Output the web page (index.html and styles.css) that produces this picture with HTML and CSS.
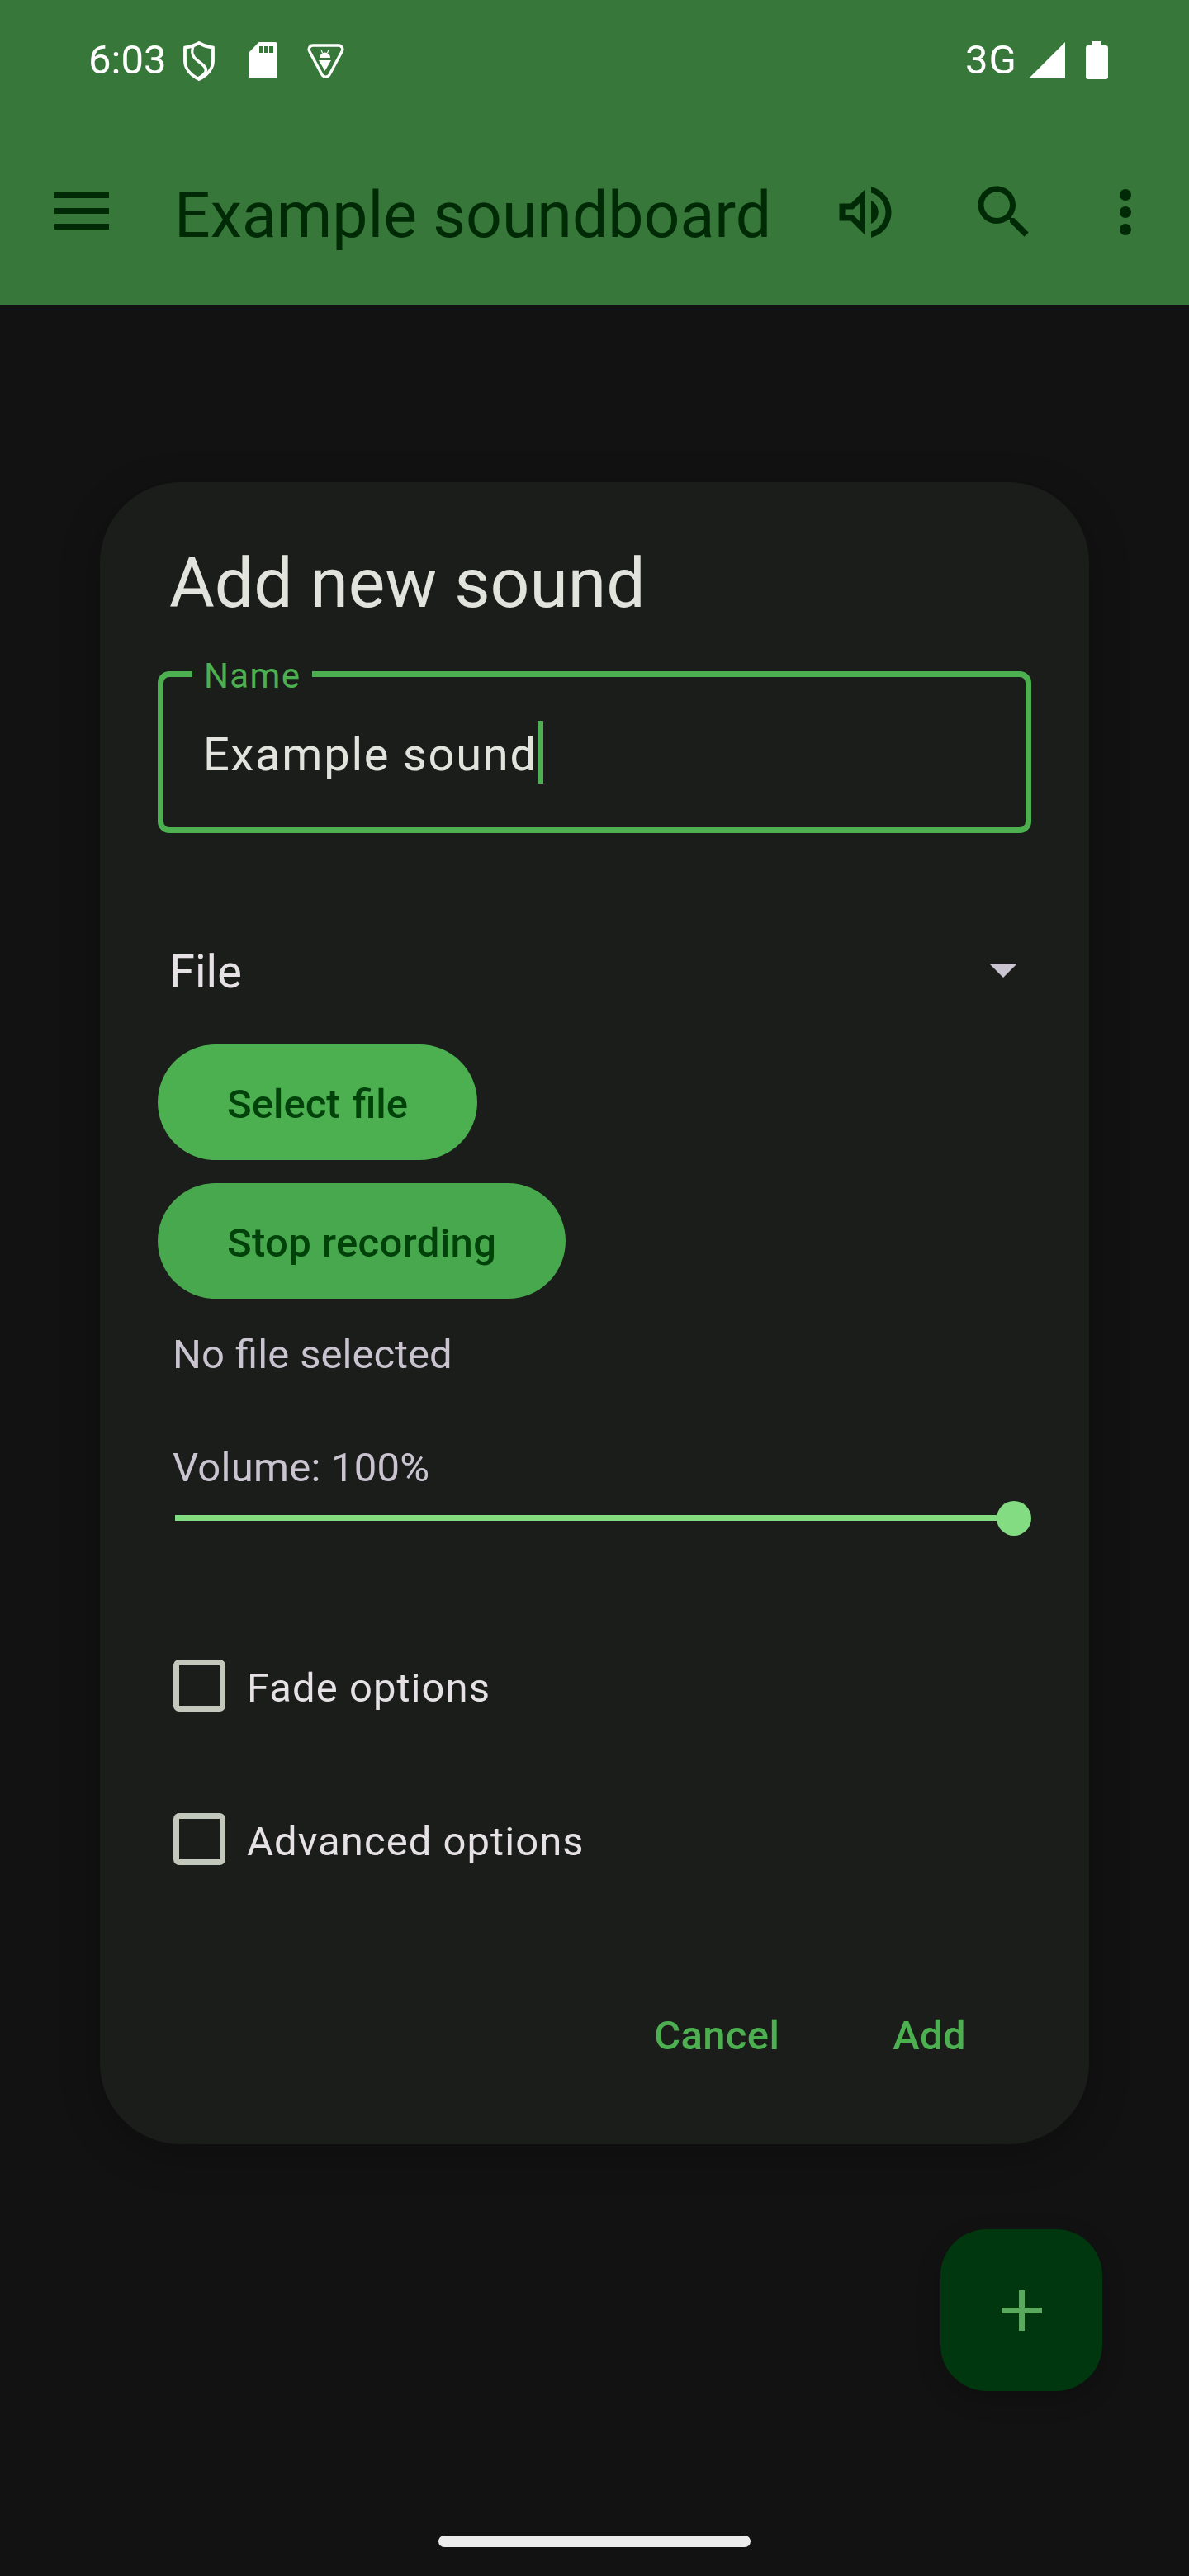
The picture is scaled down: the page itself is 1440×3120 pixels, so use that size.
FILE: index.html
```html
<!DOCTYPE html>
<html lang="en">

<head>
    <meta charset="utf-8">
    <meta name="viewport" content="width=device-width, initial-scale=1.0">
    <title>Example soundboard</title>
    <link rel="stylesheet" href="styles.css">
</head>

<body>
    <header class="appbar">
        <div class="status">
            <div class="status-left">
                <span class="clock">6:03</span>
                <svg class="ic-shield" viewBox="0 0 40 48">
                    <path d="M20 2 C25 5 31 7 37 7.5 V24 C37 33 30 41 20 46 C10 41 3 33 3 24 V7.5 C9 7 15 5 20 2 Z" fill="none" stroke="#fff" stroke-width="3.8" stroke-linejoin="round"/>
                    <path d="M13 6 C10 14 12 19 19 24 C26 29 30 33 28 37 C26 41 22 43 19 45" fill="none" stroke="#fff" stroke-width="3.4"/>
                </svg>
                <svg class="ic-sd" viewBox="0 0 35 44">
                    <path d="M12.5 0 H32 A3 3 0 0 1 35 3 V41 A3 3 0 0 1 32 44 H3 A3 3 0 0 1 0 41 V13 Z" fill="#fff"/>
                    <rect x="13" y="5" width="4" height="8" fill="#37783a"/>
                    <rect x="19" y="5" width="4" height="8" fill="#37783a"/>
                    <rect x="25" y="5" width="5" height="8" fill="#37783a"/>
                </svg>
                <svg class="ic-tri" viewBox="0 0 45 42">
                    <path d="M7 2 H38 C42 2 44 6 42 9.500 L27 37.500 C25 41 20 41 18 37.500 L3 9.500 C1 6 3 2 7 2 Z" fill="none" stroke="#fff" stroke-width="3.400"/>
                    <path d="M15 17 A6.500 6.500 0 0 1 28 17 Z" fill="#fff"/>
                    <path d="M17 7.500 L18.500 11 M26 7.500 L24.500 11" stroke="#fff" stroke-width="1.200"/>
                    <path d="M14 20 H29 L21.500 33 Z" fill="#fff"/>
                </svg>
            </div>
            <div class="status-right">
                <span class="net">3G</span>
                <svg class="ic-signal" viewBox="0 0 44 44"><path d="M44 0 V44 H0 Z" fill="#fff"/></svg>
                <svg class="ic-battery" viewBox="0 0 27 46"><path d="M7 0 H19 V5 H24 A3 3 0 0 1 27 8 V43 A3 3 0 0 1 24 46 H3 A3 3 0 0 1 0 43 V8 A3 3 0 0 1 3 5 H7 Z" fill="#fff"/></svg>
            </div>
        </div>
        <div class="toolbar">
            <svg class="ic-menu" viewBox="0 0 66 45">
                <rect width="66" height="7"/>
                <rect y="19" width="66" height="7"/>
                <rect y="38" width="66" height="7"/>
            </svg>
            <h1 class="toolbar-title">Example soundboard</h1>
            <div class="actions">
                <svg class="ic-action" viewBox="0 0 24 24"><path d="M3 9v6h4l5 5V4L7 9H3zm7-.17v6.34L7.830 13H5v-2h2.830L10 8.830zM16.500 12c0-1.770-1.020-3.290-2.500-4.030v8.050c1.480-.73 2.500-2.250 2.500-4.020zM14 3.230v2.060c2.890.86 5 3.540 5 6.710s-2.110 5.850-5 6.710v2.060c4.010-.91 7-4.490 7-8.770 0-4.280-2.990-7.860-7-8.770z"/></svg>
                <svg class="ic-action ic-search" viewBox="0 0 24 24"><path d="M15.500 14h-.79l-.28-.27C15.410 12.590 16 11.110 16 9.500 16 5.910 13.090 3 9.500 3S3 5.910 3 9.500 5.910 16 9.500 16c1.610 0 3.090-.59 4.230-1.570l.27.28v.79l5 4.990L20.490 19l-4.990-5zm-6 0C7.010 14 5 11.990 5 9.500S7.010 5 9.500 5 14 7.010 14 9.500 11.990 14 9.500 14z"/></svg>
                <svg class="ic-more" viewBox="0 0 14 56">
                    <circle cx="7" cy="7" r="7"/>
                    <circle cx="7" cy="28" r="7"/>
                    <circle cx="7" cy="49" r="7"/>
                </svg>
            </div>
        </div>
    </header>

    <main class="screen">
        <section class="dialog">
            <h2 class="dialog-title">Add new sound</h2>

            <div class="field">
                <span class="field-label">Name</span>
                <span class="field-value">Example sound</span>
                <span class="caret"></span>
            </div>

            <div class="file-row">
                <span>File</span>
                <span class="arrow"></span>
            </div>

            <div class="file-buttons">
                <button class="pill pill-select">Select file</button>
                <button class="pill pill-active">Stop recording</button>
            </div>

            <p class="hint hint-file">No file selected</p>
            <p class="hint hint-volume">Volume: 100%</p>
            <div class="slider">
                <span class="slider-track"></span>
                <span class="slider-thumb"></span>
            </div>

            <label class="check check-first">
                <span class="check-box"></span>
                <span class="check-text">Fade options</span>
            </label>
            <label class="check check-second">
                <span class="check-box"></span>
                <span class="check-text">Advanced options</span>
            </label>

            <div class="dialog-actions">
                <button class="text-btn">Cancel</button>
                <button class="text-btn">Add</button>
            </div>
        </section>
    </main>

    <button class="fab">
        <svg viewBox="0 0 49 49"><path d="M21 0 H28 V21 H49 V28 H28 V49 H21 V28 H0 V21 H21 Z"/></svg>
    </button>
    <div class="home-pill"></div>
</body>

</html>
```

FILE: styles.css
```css
* {
    box-sizing: border-box;
}

html,
body {
    margin: 0;
    padding: 0;
}

body {
    position: relative;
    width: 1440px;
    height: 3120px;
    overflow: hidden;
    background-color: #111211;
    font-family: Roboto, "Liberation Sans", sans-serif;
}

button {
    border: none;
    background: none;
    padding: 0;
    font-family: inherit;
}

/* top bar */

.appbar {
    background-color: #37783a;
}

.status {
    display: flex;
    justify-content: space-between;
    align-items: center;
    height: 145px;
    padding: 0 98px 0 107px;
    color: #fff;
    font-size: 49px;
}

.status-left,
.status-right {
    display: flex;
    align-items: center;
}

.net {
    letter-spacing: 1px;
}

.ic-shield {
    width: 40px;
    height: 48px;
    margin: 3px 0 0 20px;
}

.ic-sd {
    width: 35px;
    height: 44px;
    margin: 1px 0 0 40px;
}

.ic-tri {
    width: 45px;
    height: 42px;
    margin: 3px 0 0 36px;
}

.ic-signal {
    width: 44px;
    height: 44px;
    margin: 1px 0 0 14px;
}

.ic-battery {
    width: 27px;
    height: 46px;
    margin: 0 0 0 25px;
}

.toolbar {
    display: flex;
    align-items: center;
    height: 224px;
    padding: 0 70px 0 66px;
    color: #002a06;
    fill: #002a06;
}

.ic-menu {
    width: 66px;
    height: 45px;
    margin-top: -3px;
}

.toolbar-title {
    margin: 7px 0 0 79px;
    font-size: 77px;
    font-weight: 400;
    line-height: 100px;
}

.actions {
    display: flex;
    align-items: center;
    margin-left: auto;
}

.ic-action {
    width: 84px;
    height: 84px;
}

.ic-search {
    margin-left: 84px;
}

.ic-more {
    width: 14px;
    height: 56px;
    margin-left: 98px;
}

/* dialog */

.screen {
    padding: 215px 121px 0;
}

.dialog {
    display: flex;
    flex-direction: column;
    width: 1198px;
    height: 2013px;
    padding: 73px 70px 0;
    border-radius: 98px;
    background-color: #1b1d1b;
    box-shadow: 0 12px 48px rgba(0, 0, 0, .25);
}

.dialog-title {
    margin: 0 0 0 14px;
    color: #e2e3dd;
    font-size: 84px;
    font-weight: 400;
    line-height: 100px;
}

.field {
    position: relative;
    display: flex;
    align-items: center;
    height: 196px;
    margin-top: 56px;
    padding-left: 48px;
    border: 7px solid #4caf50;
    border-radius: 14px;
}

.field-label {
    position: absolute;
    top: -22px;
    left: 35px;
    width: 145px;
    padding-left: 14px;
    background-color: #1b1d1b;
    color: #4caf50;
    font-size: 42px;
    line-height: 42px;
    letter-spacing: 1.4px;
}

.field-value {
    margin-top: 5px;
    color: #e2e3dd;
    font-size: 56px;
    line-height: 76px;
    letter-spacing: 1.75px;
}

.caret {
    width: 7px;
    height: 76px;
    background-color: #4caf50;
}

.file-row {
    display: flex;
    justify-content: space-between;
    align-items: center;
    height: 76px;
    margin-top: 130px;
    padding: 0 17px 0 14px;
    color: #e6e1e5;
    font-size: 56px;
}

.arrow {
    width: 0;
    height: 0;
    margin-top: -3px;
    border-top: 17px solid #cac4d0;
    border-left: 17.5px solid transparent;
    border-right: 17.5px solid transparent;
}

.file-buttons {
    display: flex;
    flex-direction: column;
    align-items: flex-start;
    gap: 28px;
    margin-top: 50px;
}

.pill {
    height: 140px;
    padding: 4px 84px 0;
    border-radius: 70px;
    background-color: #4caf50;
    color: #00420a;
    font-size: 49px;
    font-weight: 500;
}

/* no letter-spacing here, it would break up the fi ligature */
.pill-select {
    word-spacing: 3px;
}

.pill-active {
    background-color: #48a84d;
    letter-spacing: .35px;
}

.hint {
    margin: 0;
    color: #cac4d0;
    font-size: 49px;
    line-height: 64px;
}

.hint-file {
    margin: 36px 0 0 18px;
    word-spacing: 1px;
}

.hint-volume {
    margin: 73px 0 0 18px;
    letter-spacing: .25px;
}

.slider {
    display: flex;
    align-items: center;
    margin: 8px 0 0 21px;
}

.slider-track {
    flex: 1;
    height: 7px;
    margin-top: -2px;
    background-color: #84dc82;
}

.slider-thumb {
    width: 42px;
    height: 42px;
    border-radius: 50%;
    background-color: #84dc82;
}

.check {
    display: flex;
    align-items: center;
    gap: 26px;
    margin-left: 19px;
    color: #e6e1e5;
    font-size: 49px;
    letter-spacing: 1.05px;
}

.check-first {
    margin-top: 150px;
}

.check-second {
    margin-top: 123px;
}

.check-box {
    width: 63px;
    height: 63px;
    border: 7px solid #c2c8bc;
    border-radius: 7px;
}

.check-text {
    margin-top: 6px;
    line-height: 57px;
}

.dialog-actions {
    display: flex;
    justify-content: flex-end;
    gap: 137px;
    margin-top: 175px;
    padding-right: 79px;
}

.text-btn {
    color: #4caf50;
    font-size: 49px;
    font-weight: 500;
    line-height: 64px;
    letter-spacing: .35px;
}

/* things lying over the screen */

.fab {
    position: absolute;
    top: 2700px;
    left: 1139px;
    display: flex;
    justify-content: center;
    align-items: center;
    width: 196px;
    height: 196px;
    border-radius: 56px;
    background-color: #00370e;
    box-shadow: 0 10px 30px rgba(0, 0, 0, .2);
}

.fab svg {
    width: 49px;
    height: 49px;
    fill: #5aa95f;
}

.home-pill {
    position: absolute;
    top: 3071px;
    left: 531px;
    width: 378px;
    height: 14px;
    border-radius: 7px;
    background-color: #ececec;
}
```
